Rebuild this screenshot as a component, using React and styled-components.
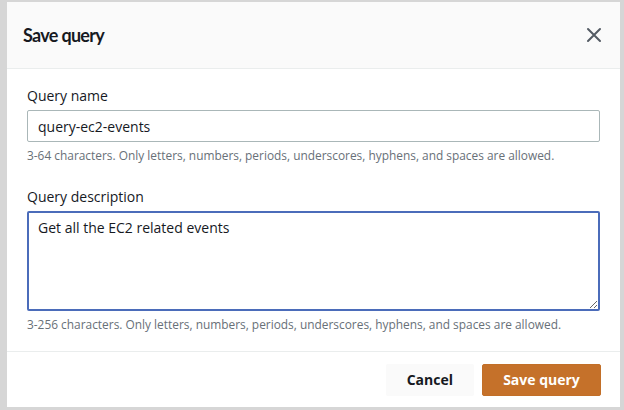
import React from 'react';
import styled, { createGlobalStyle } from 'styled-components';

const GlobalStyle = createGlobalStyle`
  html, body {
    margin: 0;
    padding: 0;
    background: #d9d9d9;
    font-family: 'Open Sans', 'Noto Sans', sans-serif;
  }
`;

const App = () => (
  <>
    <GlobalStyle />
    <Screen>
      <Modal>
        <Header>
          <Title>Save query</Title>
          <CloseButton aria-label="Close">
            <svg width="16" height="16" viewBox="0 0 16 16">
              <path d="M2 2 L14 14 M14 2 L2 14" stroke="#545b64" strokeWidth="2" strokeLinecap="round" />
            </svg>
          </CloseButton>
        </Header>

        <Body>
          <Field>
            <Label>Query name</Label>
            <Input value="query-ec2-events" readOnly />
            <Hint>3-64 characters. Only letters, numbers, periods, underscores, hyphens, and spaces are allowed.</Hint>
          </Field>

          <Field>
            <Label>Query description</Label>
            <TextArea value="Get all the EC2 related events" readOnly />
            <Hint>3-256 characters. Only letters, numbers, periods, underscores, hyphens, and spaces are allowed.</Hint>
          </Field>
        </Body>

        <Footer>
          <Button>Cancel</Button>
          <Button primary>Save query</Button>
        </Footer>
      </Modal>
    </Screen>
  </>
);

const Screen = styled.div`
  width: 624px;
  height: 410px;
  box-sizing: border-box;
  padding: 2px 4px 3px 7px;
  background: #d6d6d6;
  overflow: hidden;
`;

const Modal = styled.div`
  height: 100%;
  background: #fff;
  display: flex;
  flex-direction: column;
  box-sizing: border-box;
`;

const Header = styled.div`
  height: 66px;
  flex-shrink: 0;
  background: #fafafa;
  border-bottom: 1px solid #eaeded;
  display: flex;
  align-items: center;
  justify-content: space-between;
  padding: 0 18px 0 16px;
`;

const Title = styled.h2`
  margin: 0;
  font-family: Lato, 'Open Sans', sans-serif;
  font-size: 18px;
  font-weight: 700;
  color: #16191f;
  letter-spacing: -0.7px;
`;

const CloseButton = styled.button`
  border: none;
  background: none;
  padding: 0;
  display: flex;
  cursor: pointer;
`;

const Body = styled.div`
  flex: 1;
  padding: 16px 20px 0 20px;
  display: flex;
  flex-direction: column;
  gap: 23px;
`;

const Field = styled.div`
  display: flex;
  flex-direction: column;
`;

const Label = styled.label`
  font-size: 14px;
  color: #16191f;
  line-height: 22px;
  margin-bottom: 3px;
`;

const Input = styled.input`
  height: 32px;
  box-sizing: border-box;
  border: 1px solid #aab7b8;
  border-radius: 2px;
  padding: 0 10px;
  font-family: inherit;
  font-size: 14px;
  color: #16191f;
  outline: none;
`;

const TextArea = styled.textarea`
  height: 100px;
  box-sizing: border-box;
  border: 2px solid #4b6cba;
  border-radius: 2px;
  padding: 4px 9px;
  font-family: inherit;
  font-size: 14px;
  line-height: 22px;
  color: #16191f;
  outline: none;
  resize: vertical;
`;

const Hint = styled.div`
  font-size: 11.9px;
  color: #687078;
  margin-top: 5px;
  line-height: 16px;
`;

const Footer = styled.div`
  height: 55px;
  flex-shrink: 0;
  border-top: 1px solid #eaeded;
  display: flex;
  align-items: center;
  justify-content: flex-end;
  gap: 8px;
  padding: 0 19px 0 0;
`;

const Button = styled.button`
  height: 32px;
  box-sizing: border-box;
  padding: 0 20px;
  font-family: inherit;
  font-size: 14px;
  font-weight: 700;
  border-radius: 2px;
  cursor: pointer;
  border: 1px solid ${(p) => (p.primary ? '#c26f28' : 'transparent')};
  background: ${(p) => (p.primary ? '#c5712a' : '#fafafa')};
  color: ${(p) => (p.primary ? '#fff' : '#16191f')};
  min-width: ${(p) => (p.primary ? '119px' : '88px')};
`;

export default App;
